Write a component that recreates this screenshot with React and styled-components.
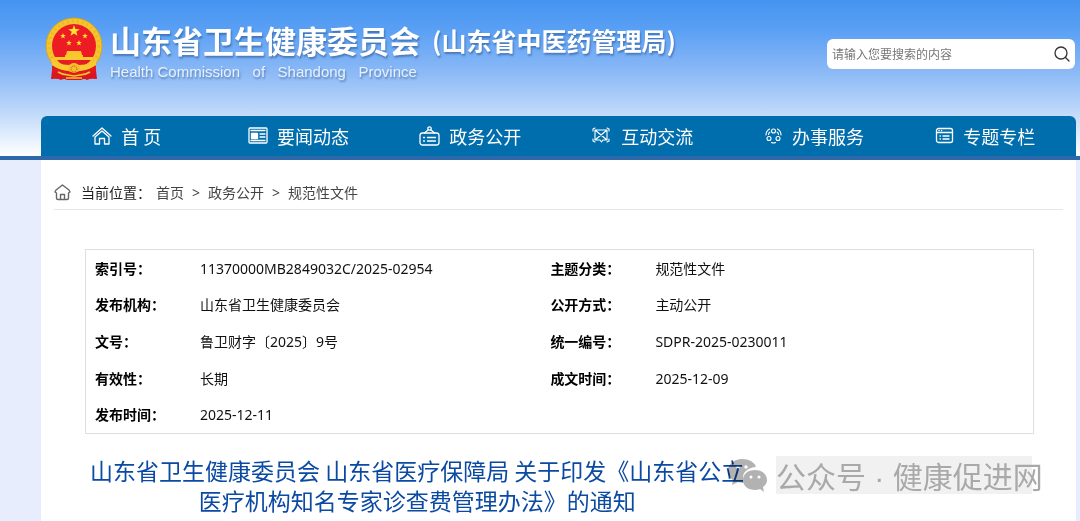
import React from "react";
import styled, { createGlobalStyle } from "styled-components";

const GlobalStyle = createGlobalStyle`
  * {
    box-sizing: border-box;
  }
  body {
    margin: 0;
    background: #e7edfc;
    color: #111;
    font: 14px/20px "Noto Sans", "Noto Sans CJK SC", sans-serif;
  }
  a {
    color: inherit;
    text-decoration: none;
  }
`;

const Page = styled.div`
  display: flex;
  flex-direction: column;
  min-height: 100vh;
`;

const Header = styled.header`
  padding: 16px 4px 0 41px;
  background: linear-gradient(#4594f1 0, #5aa0f4 30px, #8bb9f6 72px, #bcd7fa 110px, #fff 156px);
  border-bottom: 4px solid #2c68aa;
`;

const HeaderTop = styled.div`
  display: flex;
  justify-content: space-between;
  height: 100px;
`;

const Brand = styled.a`
  display: flex;
  align-items: flex-start;
  gap: 7px;
  padding-left: 4px;
  color: #fff;
  white-space: nowrap;
  text-shadow: 1px 2px 2px rgba(30, 70, 130, 0.5);
`;

const BrandName = styled.span`
  display: flex;
  align-items: center;
  gap: 12px;
  height: 48px;
  font: 700 31px/48px "Noto Sans CJK SC", sans-serif;
`;

const BrandAlias = styled.span`
  font-size: 25px;
`;

const BrandEnglish = styled.span`
  display: block;
  color: #e6f0fd;
  font: 15px/16px "Liberation Sans", sans-serif;
  white-space: pre;
`;

const SearchForm = styled.form`
  display: flex;
  align-items: center;
  width: 248px;
  height: 30px;
  margin: 23px 1px 0 0;
  padding: 0 5px;
  border-radius: 6px;
  background: #fff;
`;

const SearchInput = styled.input`
  flex: 1;
  min-width: 0;
  padding: 0;
  border: 0;
  outline: 0;
  background: none;
  font: 12px/20px "Noto Sans CJK SC", sans-serif;

  &::placeholder {
    color: #777;
    opacity: 1;
  }
`;

const SearchButton = styled.button`
  display: flex;
  padding: 0;
  border: 0;
  background: none;
  color: #333;
  cursor: pointer;
`;

const Nav = styled.nav`
  display: grid;
  grid-template-columns: repeat(6, 1fr);
  height: 40px;
  padding-right: 5px;
  border-radius: 6px 6px 0 0;
  background: #006eac;
`;

const NavLink = styled.a`
  display: flex;
  align-items: center;
  justify-content: center;
  gap: 9px;
  color: #fff;
  font: 18px/40px "Noto Sans CJK SC", sans-serif;
  white-space: nowrap;
`;

const Main = styled.main`
  flex: 1;
  margin: 0 4px 0 41px;
  padding: 0 13px;
  background: #fff;
`;

const Breadcrumb = styled.nav`
  display: flex;
  align-items: center;
  gap: 8px;
  height: 50px;
  padding-top: 16px;
  border-bottom: 1px solid #e6e6e6;
  color: #444;
`;

const CrumbLabel = styled.span`
  margin: 0 -3px 0 2px;
  color: #222;
`;

const Article = styled.article`
  padding: 39px 29px 0 31px;
`;

const InfoTable = styled.table`
  width: 100%;
  height: 185px;
  border: 1px solid #dedede;
  border-collapse: separate;
  border-spacing: 0;
  table-layout: fixed;
`;

const Label = styled.th`
  width: ${(props) => (props.$first ? "114px" : "105px")};
  padding: 1px 0 0 ${(props) => (props.$first ? "9px" : "0")};
  color: #000;
  font-weight: 700;
  text-align: left;
`;

const Value = styled.td`
  width: ${(props) => (props.$first ? "37%" : "auto")};
  padding: 1px 0 0;
`;

const TitleArea = styled.div`
  position: relative;
  padding: 21px 0 4px;
`;

const Title = styled.h1`
  width: 70%;
  margin: 0;
  color: #0b4aa2;
  font: 400 23px/30px "Noto Sans CJK SC", sans-serif;
  text-align: center;
`;

const Watermark = styled.div`
  position: absolute;
  top: 22px;
  left: 643px;
  display: flex;
  align-items: center;
  gap: 9px;
  opacity: 0.9;
  mix-blend-mode: multiply;
`;

const WatermarkText = styled.span`
  width: 256px;
  height: 38px;
  background: rgba(225, 225, 225, 0.55);
  color: #a0a0a0;
  font: 30px/44px "Liberation Sans", "Noto Sans CJK SC", sans-serif;
  white-space: nowrap;
`;

const Stroke = styled.svg`
  flex: none;
  fill: none;
  stroke: currentColor;
  stroke-width: ${(props) => props.$weight || 1.3};
  stroke-linecap: round;
  stroke-linejoin: round;
`;

function Star({ x, y, r }) {
  return (
    <path
      transform={`translate(${x} ${y}) scale(${r})`}
      d="M0-1 .24-.32.95-.31.38.12.59.81 0 .4-.59.81-.38.12-.95-.31-.24-.32Z"
      fill="#ffe22d"
    />
  );
}

function Emblem() {
  return (
    <svg width="58" height="66" viewBox="0 0 58 66" aria-hidden="true">
      <circle cx="29" cy="30" r="28" fill="#f4c52c" stroke="#d9a322" />
      <circle cx="29" cy="30" r="25" fill="none" stroke="#ebb929" strokeWidth="3" strokeDasharray="2 3" />
      <path d="M8 46Q14 51 29 51t21-5l2 17q-7-1-10 1-3-2-6 0H22q-3-2-6 0-3-2-10-1Z" fill="#d9151d" />
      <circle cx="29" cy="30" r="22" fill="#ed1c24" />
      <Star x={29} y={15} r={6} />
      <Star x={18} y={20} r={3} />
      <Star x={40} y={20} r={3} />
      <Star x={24} y={27} r={3} />
      <Star x={34} y={27} r={3} />
      <path d="M22 35h14l1 4h1v3H20v-3h1Z" fill="#fbc62c" />
      <path d="M10 41h38v3H10Z" fill="#f8ca30" />
      <path d="M7 42q4 7 17 7l5-2 5 2q13 0 17-7v7q-6 5-16 6H23Q13 54 7 49Z" fill="#f8ca30" />
      <path d="M14 45q6 2 10 1M44 45q-6 2-10 1" stroke="#dc2120" strokeWidth="2" fill="none" />
      <circle cx="29" cy="53" r="6" fill="#f4be2b" />
      <circle cx="29" cy="53" r="3" fill="none" stroke="#d83a1d" strokeDasharray="1 1" />
      <path d="M7 50q9 6 16 5l6 2 6-2q7 1 16-5v5q-8 6-16 5l-6-1-6 1q-8 1-16-5Z" fill="#df1a20" />
      <path d="M13 56q5 3 10 3l6 1 6-1q5 0 10-3M21 62h16" stroke="#f6c72e" strokeWidth="1.500" fill="none" />
    </svg>
  );
}

function HomeIcon() {
  return (
    <Stroke width="20" height="18" viewBox="0 0 20 18" aria-hidden="true">
      <path d="M1 9 10 1l9 8M3 10l7-6 7 6M3 10v7h4.5v-5.5h5V17H17v-7" />
    </Stroke>
  );
}

function NewsIcon() {
  return (
    <Stroke width="20" height="18" viewBox="0 0 20 18" aria-hidden="true">
      <rect x="1" y="1" width="18" height="15" rx="1" />
      <path d="M3 3.5h14M12 7h5M12 10h5M3 13.5h14" />
      <path d="M3.5 6.5h6v5h-6Z" fill="currentColor" />
    </Stroke>
  );
}

function BoardIcon() {
  return (
    <Stroke width="21" height="20" viewBox="0 0 21 20" aria-hidden="true">
      <rect x="1" y="7" width="19" height="12" rx="2.5" />
      <circle cx="10.5" cy="2.5" r="1.7" />
      <path d="m9 4-3.5 3M12 4l3.5 3M4.5 11.5h1M8.5 11.5h8M4.5 15h1M8.5 15h8" />
    </Stroke>
  );
}

function ExchangeIcon() {
  return (
    <Stroke $weight={1.1} width="22" height="18" viewBox="-2 0 22 18" aria-hidden="true">
      <path d="M3 3h12v10h-4l-1.500 2L8 13H3ZM3 3l12 10M15 3 3 13M1 4V2l2-1M15 1l2 1v2M1 12v2l2 1M15 15l2-1v-2" />
    </Stroke>
  );
}

function ServiceIcon() {
  return (
    <Stroke $weight={1.1} width="20" height="18" viewBox="-2 0 20 18" aria-hidden="true">
      <circle cx="8.500" cy="4" r="2" />
      <circle cx="4" cy="11.500" r="2" />
      <circle cx="13" cy="11.500" r="2" />
      <path d="M4.500 2Q1 4 1 8M5 5Q3.500 6 3.500 7.500M12.500 2q3.500 2 3.500 6M12 5q1.500 1 1.500 2.500M6.500 15.500q2 1 4 0" />
    </Stroke>
  );
}

function TopicIcon() {
  return (
    <Stroke width="19" height="18" viewBox="0 0 19 18" aria-hidden="true">
      <rect x="1.5" y="1.5" width="16" height="14" rx="2" />
      <path d="M2 5.5h15M4 3.5h.2M6.5 3.5h.2M5 9h.5M8 9h6M5 12h.5M8 12h6" />
    </Stroke>
  );
}

function CrumbHomeIcon() {
  return (
    <Stroke $weight={1.4} width="17" height="17" viewBox="0 0 17 17" aria-hidden="true">
      <path
        stroke="#666"
        d="m1 8 1-2 6.500-5L15 6l1 2-1.500 1v5q0 1.500-1.500 1.500H4q-1.500 0-1.500-1.500V9ZM6.500 15v-4.500h4V15"
      />
    </Stroke>
  );
}

function WechatIcon() {
  return (
    <svg width="39" height="34" viewBox="0 0 39 34" aria-hidden="true">
      <path
        d="M14 1C6 1 0 6 0 13q0 6 5 9l-1 5 6-3q3 1 6 1-4-11 7-15 2-1 5-1Q25 1 14 1Z"
        fill="#aaa"
      />
      <path
        d="M27 12C20 12 15 16 15 22s5 10 12 10q3 0 5-1l4 3-1-5q4-3 4-7c0-6-5-10-12-10Z"
        fill="#aaa"
      />
      <g fill="#fff">
        <circle cx="10" cy="9" r="1.700" />
        <circle cx="18" cy="9" r="1.700" />
        <circle cx="23" cy="19" r="1.500" />
        <circle cx="31" cy="19" r="1.500" />
      </g>
    </svg>
  );
}

const navItems = [
  { text: "首 页", Icon: HomeIcon },
  { text: "要闻动态", Icon: NewsIcon },
  { text: "政务公开", Icon: BoardIcon },
  { text: "互动交流", Icon: ExchangeIcon },
  { text: "办事服务", Icon: ServiceIcon },
  { text: "专题专栏", Icon: TopicIcon },
];

const infoRows = [
  ["索引号：", "11370000MB2849032C/2025-02954", "主题分类：", "规范性文件"],
  ["发布机构：", "山东省卫生健康委员会", "公开方式：", "主动公开"],
  ["文号：", "鲁卫财字〔2025〕9号", "统一编号：", "SDPR-2025-0230011"],
  ["有效性：", "长期", "成文时间：", "2025-12-09"],
  ["发布时间：", "2025-12-11"],
];

function App() {
  return (
    <Page lang="zh-CN">
      <GlobalStyle />
      <Header>
        <HeaderTop>
          <Brand href="#">
            <Emblem />
            <span>
              <BrandName>
                山东省卫生健康委员会
                <BrandAlias>(山东省中医药管理局)</BrandAlias>
              </BrandName>
              <BrandEnglish>{"Health Commission   of   Shandong   Province"}</BrandEnglish>
            </span>
          </Brand>
          <SearchForm role="search" onSubmit={(e) => e.preventDefault()}>
            <SearchInput aria-label="搜索" placeholder="请输入您要搜索的内容" />
            <SearchButton type="submit" aria-label="搜索">
              <Stroke width="16" height="16" viewBox="0 0 16 16">
                <circle cx="7" cy="7" r="6" />
                <path d="m11.500 11.500 3.500 3.500" />
              </Stroke>
            </SearchButton>
          </SearchForm>
        </HeaderTop>
        <Nav>
          {navItems.map(({ text, Icon }) => (
            <NavLink href="#" key={text}>
              <Icon />
              {text}
            </NavLink>
          ))}
        </Nav>
      </Header>
      <Main>
        <Breadcrumb aria-label="当前位置">
          <CrumbHomeIcon />
          <CrumbLabel>当前位置：</CrumbLabel>
          <a href="#">首页</a>
          <span>&gt;</span>
          <a href="#">政务公开</a>
          <span>&gt;</span>
          <a href="#">规范性文件</a>
        </Breadcrumb>
        <Article>
          <InfoTable>
            <tbody>
              {infoRows.map(([label, value, label2, value2]) => (
                <tr key={label}>
                  <Label scope="row" $first>{label}</Label>
                  <Value $first>{value}</Value>
                  {label2 && <Label scope="row">{label2}</Label>}
                  {label2 && <Value>{value2}</Value>}
                </tr>
              ))}
            </tbody>
          </InfoTable>
          <TitleArea>
            <Title>
              山东省卫生健康委员会 山东省医疗保障局 关于印发《山东省公立医疗机构知名专家诊查费管理办法》的通知
            </Title>
            <Watermark>
              <WechatIcon />
              <WatermarkText>公众号 · 健康促进网</WatermarkText>
            </Watermark>
          </TitleArea>
        </Article>
      </Main>
    </Page>
  );
}

export default App;
